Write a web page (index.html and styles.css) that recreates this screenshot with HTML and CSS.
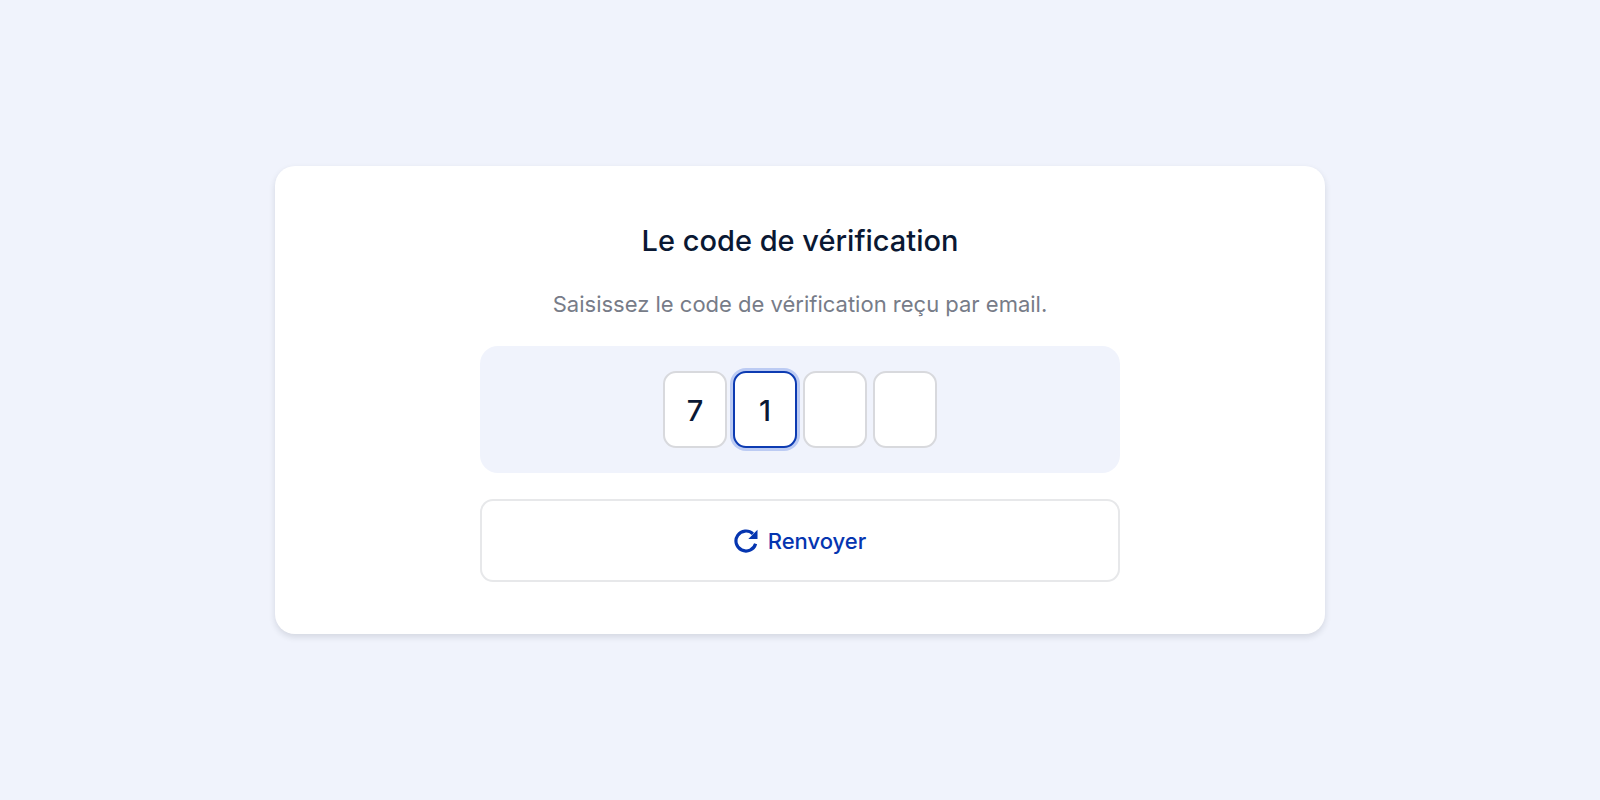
FILE: index.html
```html
<!DOCTYPE html>
<html lang="fr">
<head>
    <meta charset="utf-8">
    <title>Le code de vérification</title>
    <meta name="viewport" content="width=device-width, initial-scale=1">
    <link rel="stylesheet" href="styles.css">
</head>
<body>
<main class="card">
    <h1 class="title">Le code de vérification</h1>
    <p class="hint" id="hint">Saisissez le code de vérification reçu par email.</p>
    <form class="form">
        <div class="code" role="group" aria-labelledby="hint">
            <input class="digit" type="text" inputmode="numeric" maxlength="1" value="7" aria-label="Chiffre 1">
            <input class="digit active" type="text" inputmode="numeric" maxlength="1" value="1" aria-label="Chiffre 2">
            <input class="digit" type="text" inputmode="numeric" maxlength="1" aria-label="Chiffre 3">
            <input class="digit" type="text" inputmode="numeric" maxlength="1" aria-label="Chiffre 4">
        </div>
        <button class="resend" type="button">
            <svg class="icon" viewBox="0 0 24 24" aria-hidden="true">
                <path d="M18.9 4.8A10 10 0 1 0 21.6 14.7" fill="none" stroke="currentColor" stroke-width="3.2"/>
                <path d="M23.5 0.8v9.2h-9.2z" fill="currentColor"/>
            </svg>
            Renvoyer
        </button>
    </form>
</main>
</body>
</html>
```

FILE: styles.css
```css
* {
    box-sizing: border-box;
}
body {
    display: flex;
    align-items: center;
    justify-content: center;
    min-height: 100vh;
    margin: 0;
    padding: 24px;
    background: #f0f3fc;
    color: #0a1833;
    font-family: Inter, "Liberation Sans", sans-serif;
}
.card {
    display: flex;
    flex-direction: column;
    align-items: center;
    width: 100%;
    max-width: 1050px;
    padding: 52px 24px;
    border-radius: 20px;
    background: #fff;
    box-shadow: 0 3px 6px rgba(20, 30, 50, 0.13);
}
.title {
    margin: 0;
    font-size: 29px;
    font-weight: 500;
    line-height: 46px;
    text-align: center;
}
.hint {
    margin: 22px 0 24px;
    color: #777c88;
    font-size: 22px;
    line-height: 36px;
    text-align: center;
}
.form {
    display: flex;
    flex-direction: column;
    gap: 26px;
    width: 100%;
    max-width: 640px;
}
.code {
    display: flex;
    justify-content: center;
    gap: 6px;
    padding: 25px;
    border-radius: 18px;
    background: #f0f3fc;
}
.digit {
    width: 64px;
    height: 77px;
    padding: 2px 0 0;
    border: 2px solid #d8d9dd;
    border-radius: 13px;
    background: #fff;
    color: inherit;
    font: 500 29px/36px Inter, "Liberation Sans", sans-serif;
    text-align: center;
}
.digit:focus,
.digit.active {
    border-color: #0d3bb2;
    outline: none;
    box-shadow: 0 0 0 3px #bccbf3;
}
.resend {
    display: flex;
    align-items: center;
    justify-content: center;
    gap: 10px;
    height: 83px;
    border: 2px solid #e7e8ea;
    border-radius: 13px;
    background: #fff;
    color: #0535b0;
    font: 500 22px/36px Inter, "Liberation Sans", sans-serif;
    cursor: pointer;
}
.icon {
    width: 24px;
    height: 24px;
}
```
